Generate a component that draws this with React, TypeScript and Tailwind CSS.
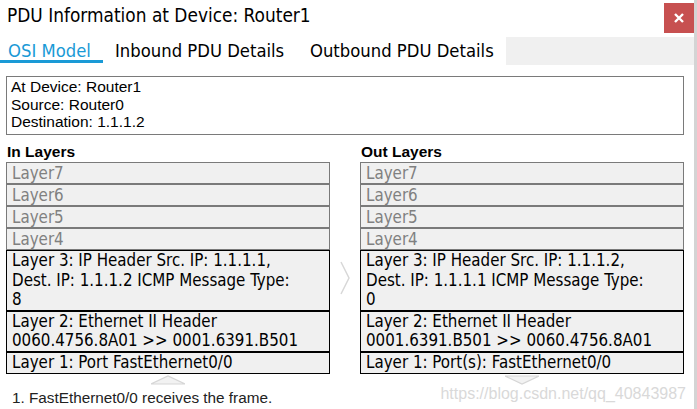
import React from "react";

const tahoma = "font-['DejaVu_Sans_Condensed','DejaVu_Sans',sans-serif]";
const arial = "font-['Liberation_Sans',Arial,sans-serif]";

const inLayers = [
  ["Layer 3: IP Header Src. IP: 1.1.1.1,", "Dest. IP: 1.1.1.2 ICMP Message Type:", "8"],
  ["Layer 2: Ethernet II Header", "0060.4756.8A01 >> 0001.6391.B501"],
  ["Layer 1: Port FastEthernet0/0"],
];

const outLayers = [
  ["Layer 3: IP Header Src. IP: 1.1.1.2,", "Dest. IP: 1.1.1.1 ICMP Message Type:", "0"],
  ["Layer 2: Ethernet II Header", "0001.6391.B501 >> 0060.4756.8A01"],
  ["Layer 1: Port(s): FastEthernet0/0"],
];

function LayerColumn({ title, layers }: { title: string; layers: string[][] }) {
  return (
    <div className="w-[324px]">
      <div className={`${arial} text-[15.5px] font-bold leading-[20px] pt-[7px] pl-[1px] text-black`}>{title}</div>
      <div className={`${tahoma} text-[16.8px]`}>
        {["Layer7", "Layer6", "Layer5", "Layer4"].map((l) => (
          <div
            key={l}
            className="h-[22px] border border-[#7a7a7a] bg-[#f0f0f0] pl-[5px] leading-[20px] text-[#808080] whitespace-nowrap"
          >
            {l}
          </div>
        ))}
        {layers.map((lines, i) => (
          <div
            key={i}
            className="border border-black bg-[#f0f0f0] pl-[5px] leading-[19.6px] text-black whitespace-nowrap"
          >
            {lines.map((t, j) => (
              <div key={j}>{t}</div>
            ))}
          </div>
        ))}
      </div>
    </div>
  );
}

export default function App() {
  return (
    <div className="w-[697px] h-[409px] bg-white flex overflow-hidden relative">
      <div className="w-[694px] flex flex-col">
        {/* title bar */}
        <div className="h-[37px] flex items-start justify-between">
          <div className={`${tahoma} text-[18.9px] leading-[22px] pl-[7px] pt-[4px] text-black`}>
            PDU Information at Device: Router1
          </div>
          <button className="w-[30px] h-[30px] mt-[3px] bg-[#c75050] flex items-center justify-center">
            <svg width="10" height="10" viewBox="0 0 10 10">
              <path d="M1 1 L9 9 M9 1 L1 9" stroke="white" strokeWidth="2.4" />
            </svg>
          </button>
        </div>

        {/* tabs */}
        <div className={`${tahoma} h-[28px] flex text-[18.3px] leading-[28px]`}>
          <div className="w-[103px] bg-white relative pl-[8px] text-[#1a9ad6]">
            OSI Model
            <div className="absolute left-0 right-0 top-[23px] h-[3px] bg-[#1a9ad6]" />
          </div>
          <div className="w-[195px] bg-white pl-[12px] text-black">Inbound PDU Details</div>
          <div className="w-[208px] bg-white pl-[12px] text-black">Outbound PDU Details</div>
          <div className="flex-1 bg-[#f0f0f0]" />
        </div>

        {/* info */}
        <div
          className={`${arial} mt-[11px] ml-[6px] w-[678px] h-[59px] border border-[#7a7a7a] pl-[4px] pt-[1px] text-[15.5px] leading-[17.5px] text-black`}
        >
          <div>At Device: Router1</div>
          <div>Source: Router0</div>
          <div>Destination: 1.1.1.2</div>
        </div>

        {/* layers */}
        <div className="flex ml-[6px]">
          <div className="flex flex-col items-center">
            <LayerColumn title="In Layers" layers={inLayers} />
            <svg width="34" height="10" viewBox="0 0 34 10" className="mt-[1px]">
              <polygon points="0,9 17,1 34,9" fill="#f2f2f2" stroke="#d6d6d6" strokeWidth="1.2" />
            </svg>
          </div>
          <div className="w-[30px] flex justify-center pt-[126px]">
            <svg width="10" height="34" viewBox="0 0 10 34">
              <polyline points="1,1 9,17 1,33" fill="none" stroke="#d8d8d8" strokeWidth="1.5" />
            </svg>
          </div>
          <div className="flex flex-col items-center">
            <LayerColumn title="Out Layers" layers={outLayers} />
            <svg width="34" height="10" viewBox="0 0 34 10" className="mt-[1px]">
              <polygon points="0,1 17,9 34,1" fill="#f2f2f2" stroke="#d6d6d6" strokeWidth="1.2" />
            </svg>
          </div>
        </div>

        <div className="flex items-end justify-between">
          <div className={`${arial} pl-[12px] pt-[1px] text-[15.3px] leading-[18px] text-[#222]`}>
            1. FastEthernet0/0 receives the frame.
          </div>
          <div className={`${arial} text-[16px] leading-[18px] text-[#d9d9d9] pr-[8px] mb-[4px]`}>
            https://blog.csdn.net/qq_40843987
          </div>
        </div>
      </div>
      <div className="w-[3px] bg-[#d4d4d4]" />
    </div>
  );
}
